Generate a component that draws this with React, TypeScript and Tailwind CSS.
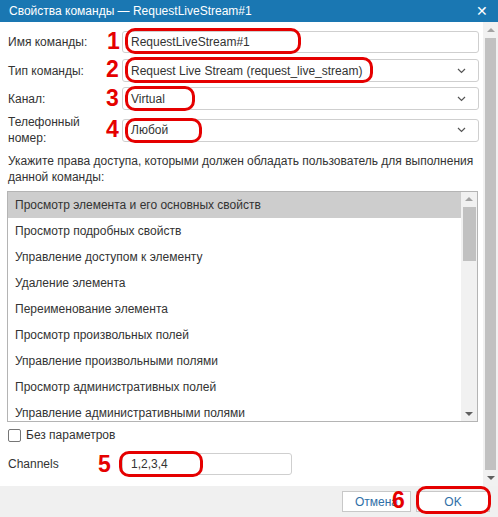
import React from 'react';

const rights = [
    'Просмотр элемента и его основных свойств',
    'Просмотр подробных свойств',
    'Управление доступом к элементу',
    'Удаление элемента',
    'Переименование элемента',
    'Просмотр произвольных полей',
    'Управление произвольными полями',
    'Просмотр административных полей',
    'Управление административными полями',
];

function Chevron() {
    return (
        <svg width="9" height="6" viewBox="0 0 9 6" className="text-[#555]">
            <path d="M1 1l3.5 3.5L8 1" fill="none" stroke="currentColor" strokeWidth="1.2" />
        </svg>
    );
}

function Up() {
    return <div className="h-0 w-0 border-x-[4px] border-b-[4px] border-x-transparent border-b-[#a3a3a3]" />;
}

function Down() {
    return <div className="h-0 w-0 border-x-[4px] border-t-[4px] border-x-transparent border-t-[#606060]" />;
}

function Select({ value }: { value: string }) {
    return (
        <div className="flex h-[23px] flex-1 items-center justify-between rounded-[3px] border border-[#cfcfcf] bg-white pl-[8px] pr-[12px]">
            <span>{value}</span>
            <Chevron />
        </div>
    );
}

function Mark({ n, className }: { n: string; className: string }) {
    return <div className={`absolute text-[23px] font-bold leading-none text-[#e50000] ${className}`}>{n}</div>;
}

function Ring({ className }: { className: string }) {
    return <div className={`pointer-events-none absolute rounded-[10px] border-[3px] border-[#e50000] ${className}`} />;
}

export default function App() {
    return (
        <div className="relative flex h-[517px] w-[498px] flex-col overflow-hidden bg-white text-[12px] text-[#333]" style={{ fontFamily: '"Liberation Sans", Arial, sans-serif' }}>
            <div className="flex h-[22px] items-center justify-between bg-[#1a77b2] pl-[9px] pr-[10px] text-[12px] text-white">
                <span>Свойства команды — RequestLiveStream#1</span>
                <span className="text-[14px]">✕</span>
            </div>

            <div className="flex flex-1 overflow-hidden">
                <div className="flex flex-1 flex-col pl-[8px] pr-[4px] pt-[9px]">
                    <div className="flex h-[22px] items-center">
                        <div className="w-[114px]">Имя команды:</div>
                        <div className="flex h-[22px] flex-1 items-center rounded-[3px] border border-[#cfcfcf] pl-[8px]">RequestLiveStream#1</div>
                    </div>
                    <div className="mt-[6px] flex items-center">
                        <div className="w-[114px]">Тип команды:</div>
                        <Select value="Request Live Stream (request_live_stream)" />
                    </div>
                    <div className="mt-[5px] flex items-center">
                        <div className="w-[114px]">Канал:</div>
                        <Select value="Virtual" />
                    </div>
                    <div className="mt-[4px] flex items-center">
                        <div className="w-[114px] leading-[16px]">Телефонный<br />номер:</div>
                        <Select value="Любой" />
                    </div>
                    <div className="mt-[7px] leading-[16px]">
                        Укажите права доступа, которыми должен обладать пользователь для выполнения данной команды:
                    </div>
                    <div className="mt-[6px] flex h-[231px] w-[471px] -ml-[1px] overflow-hidden border border-[#b4b4b4]">
                        <div className="flex-1">
                            {rights.map((r, i) => (
                                <div key={r} className={`flex h-[26px] shrink-0 items-center pl-[7px] ${i === 0 ? 'bg-[#cdcdcd]' : ''}`}>{r}</div>
                            ))}
                        </div>
                        <div className="flex w-[16px] flex-col items-center bg-[#f1f1f1] py-[5px]">
                            <Up />
                            <div className="mt-[6px] h-[54px] w-[13px] bg-[#c1c1c1]" />
                            <div className="flex-1" />
                            <Down />
                        </div>
                    </div>
                    <label className="mt-[4px] flex items-center gap-[5px]">
                        <span className="h-[13px] w-[13px] rounded-[2px] border border-[#767676] bg-white" />
                        <span>Без параметров</span>
                    </label>
                    <div className="mt-[9px] flex items-center">
                        <div className="w-[114px]">Channels</div>
                        <div className="flex h-[22px] w-[170px] items-center rounded-[3px] border border-[#cfcfcf] pl-[8px]">1,2,3,4</div>
                    </div>
                </div>
                <div className="flex w-[15px] flex-col items-center bg-[#f1f1f1] py-[6px]">
                    <Up />
                    <div className="mt-[6px] w-[11px] flex-1 bg-[#c1c1c1]" />
                    <div className="mt-[6px]"><Down /></div>
                </div>
            </div>

            <div className="flex h-[31px] items-center justify-end gap-[5px] bg-[#f0f0f0] pr-[8px]">
                <button className="h-[21px] w-[69px] border border-[#c8c8c8] bg-white text-[12px] text-[#2f6fa7]">Отмена</button>
                <button className="h-[21px] w-[74px] border border-[#c8c8c8] bg-white text-[12px] text-[#2f6fa7]">OK</button>
            </div>

            <Mark n="1" className="left-[107px] top-[30px]" />
            <Ring className="left-[125px] top-[28px] h-[26px] w-[176px]" />
            <Mark n="2" className="left-[106px] top-[58px]" />
            <Ring className="left-[125px] top-[57px] h-[26px] w-[248px]" />
            <Mark n="3" className="left-[106px] top-[87px]" />
            <Ring className="left-[125px] top-[86px] h-[25px] w-[70px]" />
            <Mark n="4" className="left-[106px] top-[118px]" />
            <Ring className="left-[125px] top-[118px] h-[25px] w-[77px]" />
            <Mark n="5" className="left-[98px] top-[453px]" />
            <Ring className="left-[119px] top-[451px] h-[26px] w-[84px]" />
            <Mark n="6" className="left-[392px] top-[489px]" />
            <Ring className="left-[416px] top-[486px] h-[28px] w-[75px]" />
        </div>
    );
}
